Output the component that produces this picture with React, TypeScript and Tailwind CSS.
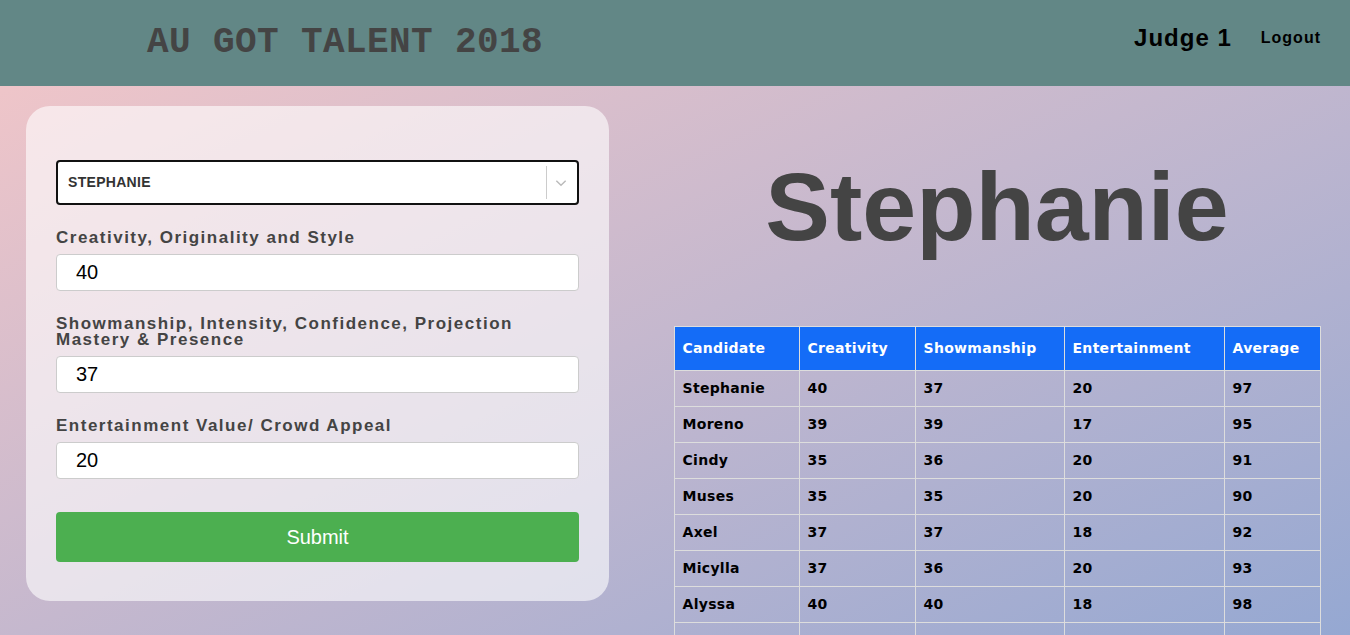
const rows = [
  { name: "Stephanie", c: 40, s: 37, e: 20, a: 97 },
  { name: "Moreno", c: 39, s: 39, e: 17, a: 95 },
  { name: "Cindy", c: 35, s: 36, e: 20, a: 91 },
  { name: "Muses", c: 35, s: 35, e: 20, a: 90 },
  { name: "Axel", c: 37, s: 37, e: 18, a: 92 },
  { name: "Micylla", c: 37, s: 36, e: 20, a: 93 },
  { name: "Alyssa", c: 40, s: 40, e: 18, a: 98 },
];

const ScoreField = ({ label, value }: { label: string; value: string }) => (
  <div className="flex flex-col">
    <label className="text-[17px] leading-[16px] font-bold tracking-[1.5px] text-[#444] mb-[8px]">
      {label}
    </label>
    <input
      readOnly
      value={value}
      className="h-[37px] w-full rounded-[4px] border border-[#ccc] bg-white pl-[19px] text-[20px] text-black outline-none"
    />
  </div>
);

const App = () => {
  return (
    <div
      className="h-[635px] w-[1350px] overflow-hidden bg-gradient-to-br from-[#f5c7c8] to-[#95a8d2]"
      style={{ fontFamily: "'Liberation Sans', Arial, sans-serif" }}
    >
      <header className="h-[86px] bg-[#628786] flex items-center justify-between pl-[147px] pr-[29px]">
        <h1
          className="text-[36px] font-bold text-[#444] tracking-[0.4px] mt-[-1px]"
          style={{ fontFamily: "'Liberation Mono', 'Courier New', monospace" }}
        >
          AU GOT TALENT 2018
        </h1>
        <div className="flex items-center gap-[29px] mt-[-10px]">
          <span className="text-[24px] font-bold tracking-[1px] text-black">Judge 1</span>
          <a href="#" className="text-[16px] font-bold tracking-[1px] text-black">
            Logout
          </a>
        </div>
      </header>

      <main className="flex pl-[26px] pt-[20px]">
        <div className="w-[583px] h-[495px] rounded-[24px] bg-white/60 px-[30px] pt-[54px]">
          <div className="relative h-[45px] rounded-[4px] border-2 border-[#111] bg-white flex items-center">
            <span className="pl-[10px] text-[14px] font-bold tracking-[0.3px] text-[#333]">STEPHANIE</span>
            <div className="absolute right-[30px] top-[4px] bottom-[4px] w-px bg-[#ccc]" />
            <svg
              className="absolute right-[9px] top-[14px]"
              width="14"
              height="14"
              viewBox="0 0 24 24"
              fill="none"
              stroke="#bbb"
              strokeWidth="2.5"
            >
              <polyline points="4 8 12 16 20 8" />
            </svg>
          </div>

          <div className="mt-[25px] flex flex-col gap-[25px]">
            <ScoreField label="Creativity, Originality and Style" value="40" />
            <ScoreField
              label="Showmanship, Intensity, Confidence, Projection Mastery & Presence"
              value="37"
            />
            <ScoreField label="Entertainment Value/ Crowd Appeal" value="20" />
          </div>

          <button className="mt-[33px] h-[50px] w-full rounded-[4px] bg-[#4caf50] text-[20px] text-white">
            Submit
          </button>
        </div>

        <div className="flex-1 flex flex-col items-center pl-[35px]">
          <h2 className="mt-[46px] text-[97px] leading-[110px] font-bold text-[#444]">Stephanie</h2>
          <table
            className="mt-[64px] w-[647px] border-collapse text-[14px] font-bold tracking-[0.3px] text-black"
            style={{ fontFamily: "'DejaVu Sans', sans-serif" }}
          >
            <thead>
              <tr className="bg-[#146cf7] text-white h-[44px]">
                <th className="w-[125px] border border-[#ddd] pl-[8px] text-left">Candidate</th>
                <th className="w-[116px] border border-[#ddd] pl-[8px] text-left">Creativity</th>
                <th className="w-[149px] border border-[#ddd] pl-[8px] text-left">Showmanship</th>
                <th className="w-[160px] border border-[#ddd] pl-[8px] text-left">Entertainment</th>
                <th className="border border-[#ddd] pl-[8px] text-left">Average</th>
              </tr>
            </thead>
            <tbody>
              {rows.map((r) => (
                <tr key={r.name} className="h-[36px]">
                  <td className="border border-[#ddd] pl-[8px]">{r.name}</td>
                  <td className="border border-[#ddd] pl-[8px]">{r.c}</td>
                  <td className="border border-[#ddd] pl-[8px]">{r.s}</td>
                  <td className="border border-[#ddd] pl-[8px]">{r.e}</td>
                  <td className="border border-[#ddd] pl-[8px]">{r.a}</td>
                </tr>
              ))}
              <tr className="h-[36px]">
                <td className="border border-[#ddd]" />
                <td className="border border-[#ddd]" />
                <td className="border border-[#ddd]" />
                <td className="border border-[#ddd]" />
                <td className="border border-[#ddd]" />
              </tr>
            </tbody>
          </table>
        </div>
      </main>
    </div>
  );
};

export default App;
